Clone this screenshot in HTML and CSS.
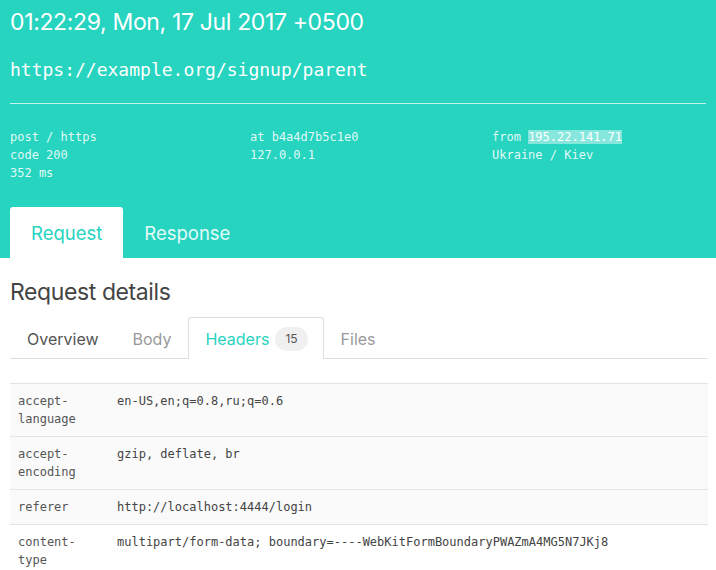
FILE: index.html
```html
<!DOCTYPE html>
<html lang="en">
<head>
<meta charset="utf-8">
<title>Request</title>
<link rel="stylesheet" href="styles.css">
</head>
<body>
<header class="hero">
  <h1 class="time">01:22:29, Mon, 17 Jul 2017 +0500</h1>
  <div class="url">https://example.org/signup/parent</div>
  <div class="divider"></div>
  <div class="meta">
    <div class="meta-col">
      <div>post / https</div>
      <div>code 200</div>
      <div>352 ms</div>
    </div>
    <div class="meta-col">
      <div>at b4a4d7b5c1e0</div>
      <div>127.0.0.1</div>
    </div>
    <div class="meta-col">
      <div>from <span class="ip">195.22.141.71</span></div>
      <div>Ukraine / Kiev</div>
    </div>
  </div>
  <nav class="main-tabs">
    <a class="main-tab active">Request</a>
    <a class="main-tab">Response</a>
  </nav>
</header>
<main class="content">
  <h2 class="section-title">Request details</h2>
  <nav class="sub-tabs">
    <a class="sub-tab dark">Overview</a>
    <a class="sub-tab">Body</a>
    <a class="sub-tab active">Headers <span class="badge">15</span></a>
    <a class="sub-tab">Files</a>
  </nav>
  <table class="headers">
    <tr class="shaded"><td class="key">accept-language</td><td class="val">en-US,en;q=0.8,ru;q=0.6</td></tr>
    <tr class="shaded"><td class="key">accept-encoding</td><td class="val">gzip, deflate, br</td></tr>
    <tr class="shaded"><td class="key">referer</td><td class="val">http://localhost:4444/login</td></tr>
    <tr><td class="key">content-type</td><td class="val">multipart/form-data; boundary=----WebKitFormBoundaryPWAZmA4MG5N7JKj8</td></tr>
  </table>
</main>
</body>
</html>
```
FILE: styles.css
```css
* { box-sizing: border-box; }
html, body { margin: 0; padding: 0; }
body {
  font-family: Inter, "Helvetica Neue", "Liberation Sans", sans-serif;
  background: #fff;
  color: #444;
  width: 716px;
  overflow: hidden;
}
.hero {
  background: #26d4c0;
  padding: 0 10px;
  color: #fff;
}
.time {
  margin: 0;
  padding-top: 7px;
  font-size: 23px;
  line-height: 30px;
  font-weight: 400;
  letter-spacing: -0.35px;
}
.url {
  margin-top: 21px;
  font-family: "DejaVu Sans Mono", monospace;
  font-size: 18px;
  line-height: 24px;
}
.divider {
  margin-top: 21px;
  height: 1px;
  background: rgba(255,255,255,0.75);
}
.meta {
  margin-top: 24px;
  display: grid;
  grid-template-columns: 240px 242px 1fr;
  font-family: "DejaVu Sans Mono", monospace;
  font-size: 12px;
  line-height: 18px;
  color: rgba(255,255,255,0.88);
}
.ip {
  background: rgba(255,255,255,0.45);
  color: #fff;
}
.main-tabs {
  margin-top: 25px;
  display: flex;
  height: 51px;
}
.main-tab {
  display: flex;
  align-items: center;
  padding: 0 21px;
  font-size: 18.5px;
  color: rgba(255,255,255,0.9);
  border-radius: 3px 3px 0 0;
}
.main-tab.active {
  background: #fff;
  color: #26d4c0;
}
.content {
  padding: 0 8px 0 10px;
}
.section-title {
  margin: 19px 0 0;
  font-size: 23px;
  line-height: 30px;
  font-weight: 400;
  color: #444;
  letter-spacing: -0.4px;
}
.sub-tabs {
  margin-top: 10px;
  display: flex;
  border-bottom: 1px solid #dedede;
  height: 42px;
}
.sub-tab {
  display: flex;
  align-items: center;
  padding: 0 16px;
  font-size: 16px;
  color: #999;
  border: 1px solid transparent;
  border-bottom: none;
  border-radius: 3px 3px 0 0;
  margin-bottom: -1px;
}
.sub-tab.dark { color: #555; }
.sub-tab.active {
  color: #26d4c0;
  background: #fff;
  border-color: #dedede;
  padding-right: 15px;
}
.badge {
  margin-left: 6px;
  background: #f0f0f0;
  color: #555;
  font-size: 12px;
  border-radius: 12px;
  padding: 0 10px;
  line-height: 24px;
}
.headers {
  margin-top: 24px;
  width: 698px;
  border-collapse: collapse;
  font-family: "DejaVu Sans Mono", monospace;
  font-size: 12px;
  line-height: 18px;
}
.headers td {
  border-top: 1px solid #e4e4e4;
  padding: 8px 8px;
  vertical-align: top;
}
.headers .key {
  width: 99px;
  color: #555;
}
.headers .val {
  color: #444;
  padding-left: 8px;
}
.headers tr.shaded td { background: #fafafa; }
```
